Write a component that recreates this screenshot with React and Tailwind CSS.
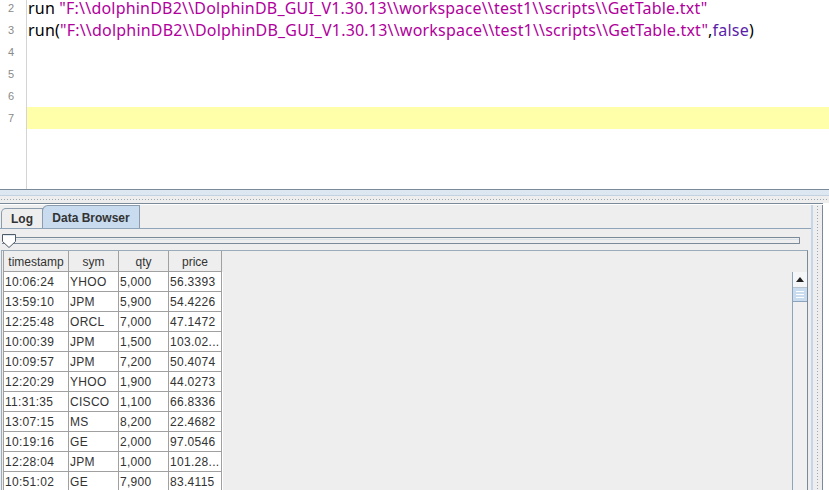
import React from "react";

const rows = [
  ["10:06:24", "YHOO", "5,000", "56.3393"],
  ["13:59:10", "JPM", "5,900", "54.4226"],
  ["12:25:48", "ORCL", "7,000", "47.1472"],
  ["10:00:39", "JPM", "1,500", "103.02..."],
  ["10:09:57", "JPM", "7,200", "50.4074"],
  ["12:20:29", "YHOO", "1,900", "44.0273"],
  ["11:31:35", "CISCO", "1,100", "66.8336"],
  ["13:07:15", "MS", "8,200", "22.4682"],
  ["10:19:16", "GE", "2,000", "97.0546"],
  ["12:28:04", "JPM", "1,000", "101.28..."],
  ["10:51:02", "GE", "7,900", "83.4115"],
];

const widths = ["w-[66px]", "w-[50px]", "w-[50px]", "w-[53px]"];

function Editor() {
  const str = "text-[#b0009c]";
  return (
    <div className="flex h-[189px] bg-white overflow-hidden">
      <div className="w-[27px] border-r border-[#d4d4d4] shrink-0 flex flex-col text-[11px] text-[#8a8a8a] font-['Liberation_Sans',sans-serif]">
        <div className="h-[20px] leading-[17px] pl-[8px]">2</div>
        <div className="h-[22px] leading-[21px] pl-[8px]">3</div>
        <div className="h-[22px] leading-[21px] pl-[8px]">4</div>
        <div className="h-[22px] leading-[21px] pl-[8px]">5</div>
        <div className="h-[21px] leading-[21px] pl-[8px]">6</div>
        <div className="h-[22px] leading-[22px] pl-[8px]">7</div>
      </div>
      <div className="flex-1 flex flex-col text-[16px] font-['Noto_Sans',sans-serif] whitespace-nowrap tracking-[0.2px]">
        <div className="h-[20px] leading-[17px] pl-[1px]">
          <span className="text-black">run </span>
          <span className={str}>"F:\\dolphinDB2\\DolphinDB_GUI_V1.30.13\\workspace\\test1\\scripts\\GetTable.txt"</span>
        </div>
        <div className="h-[22px] leading-[21px] pl-[1px]">
          <span className="text-black">run(</span>
          <span className={str}>"F:\\dolphinDB2\\DolphinDB_GUI_V1.30.13\\workspace\\test1\\scripts\\GetTable.txt"</span>
          <span className="text-black">,</span>
          <span className="text-[#5a1ea8]">false</span>
          <span className="text-black">)</span>
        </div>
        <div className="h-[22px]" />
        <div className="h-[22px]" />
        <div className="h-[21px]" />
        <div className="h-[22px] bg-[#ffffaa]" />
      </div>
    </div>
  );
}

function Splitter() {
  return (
    <div className="h-[16px] flex flex-col">
      <div className="h-[1px] bg-[#7b8a98]" />
      <div className="h-[6px] bg-[#dde7f1] border-b border-[#c4d2e0]" />
      <div className="h-[7px] bg-[#eeeeee] flex items-center">
        <div className="w-full h-[1px] bg-[radial-gradient(circle,#9aa6b2_0.6px,transparent_0.8px)] bg-[length:3px_1px]" />
      </div>
      <div className="h-[1px] bg-[#7b8a98] mr-[6px]" />
    </div>
  );
}

function Tabs() {
  return (
    <div className="flex items-end h-[24px] pl-[1px] font-['Liberation_Sans',sans-serif] text-[12px] font-bold border-b border-[#8fa4b8]">
      <div className="h-[20px] w-[42px] border border-b-0 border-[#8c9cad] rounded-tl-[5px] bg-[#eeeeee] flex items-center justify-center text-[#333]">
        Log
      </div>
      <div className="h-[23px] w-[98px] border border-b-0 border-[#8c9cad] rounded-tl-[6px] bg-[#c8dbef] flex items-start pt-[3px] justify-center text-[#333] -ml-[1px]">
        Data Browser
      </div>
    </div>
  );
}

function Slider() {
  return (
    <div className="relative h-[19px] mr-[11px]">
      <div className="absolute left-[2px] right-0 top-[6px] h-[7px] border border-[#7b8a98] border-l-0 rounded-r-[1px] bg-[#eeeeee]">
        <div className="h-[1px] bg-[#dbe3ea] mt-[1px]" />
      </div>
      <svg className="absolute left-[1px] top-[2px]" width="16" height="16" viewBox="0 0 16 16">
        <path d="M1.5 1.5 H14.5 V8.5 L8 14.5 L1.5 8.5 Z" fill="#ffffff" stroke="#4e5b68" strokeWidth="1" />
        <path d="M2.5 2.5 H13.5" stroke="#dfe7ef" />
      </svg>
    </div>
  );
}

function Table() {
  return (
    <div className="relative flex-1 border-t border-l border-r border-[#9aabbb] border-r-[#7b8a98] ml-[1px] mr-[3px] bg-[#eeeeee] overflow-hidden font-['Liberation_Sans',sans-serif] text-[12px] text-[#333]">
      <div className="flex flex-col w-[220px] ml-[1px]">
        <div className="flex h-[21px] bg-[#eeeeee]">
          {["timestamp", "sym", "qty", "price"].map((h, i) => (
            <div key={h} className={`${widths[i]} border-r border-b border-[#a0a0a0] ${i === 0 ? "border-l" : ""} flex items-center justify-center pt-[1px]`}>
              {h}
            </div>
          ))}
        </div>
        {rows.map((r, ri) => (
          <div key={ri} className="flex h-[20px] bg-white">
            {r.map((c, i) => (
              <div key={i} className={`${widths[i]} border-r border-b border-[#a0a0a0] ${i === 0 ? "border-l" : ""} flex items-center pl-[1px] pt-[1px] whitespace-nowrap overflow-hidden tracking-[0.3px]`}>
                {c}
              </div>
            ))}
          </div>
        ))}
      </div>
      <div className="absolute right-0 top-[21px] bottom-0 w-[15px] bg-[#f0f0f0] border-l border-[#8ea4bb] flex flex-col">
        <div className="h-[16px] border-b border-[#b8c4d0] bg-[#f4f6f8] flex items-center justify-center">
          <svg width="8" height="5" viewBox="0 0 8 5"><path d="M0 5 L4 0 L8 5 Z" fill="#222" /></svg>
        </div>
        <div className="h-[14px] border-b border-[#8ea4bb] bg-[#c8dbef] flex flex-col items-center justify-center gap-[2px]">
          <div className="w-[8px] h-[1px] bg-white" />
          <div className="w-[8px] h-[1px] bg-white" />
          <div className="w-[8px] h-[1px] bg-white" />
        </div>
        <div className="flex-1" />
      </div>
    </div>
  );
}

export default function App() {
  return (
    <div className="w-[829px] h-[490px] bg-white overflow-hidden flex flex-col">
      <Editor />
      <Splitter />
      <div className="flex flex-1 min-h-0">
        <div className="w-[813px] shrink-0 flex flex-col bg-[#eeeeee] border-r-2 border-[#c4d6e8] min-h-0">
          <Tabs />
          <div className="flex-1 flex flex-col pt-[2px] min-h-0">
            <Slider />
            <Table />
          </div>
        </div>
        <div className="w-[9px] shrink-0 bg-[#eeeeee] flex justify-center">
          <div className="w-[1px] h-full bg-[radial-gradient(circle,#9aa6b2_0.6px,transparent_0.8px)] bg-[length:1px_3px]" />
        </div>
        <div className="w-[1px] shrink-0 bg-[#7b8a98]" />
        <div className="flex-1 bg-white" />
      </div>
    </div>
  );
}
